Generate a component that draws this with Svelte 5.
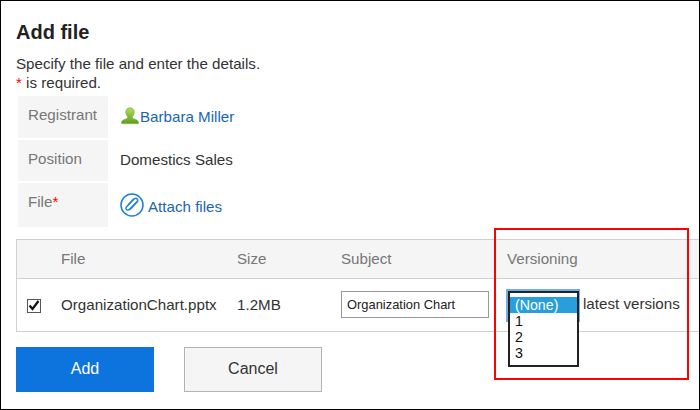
<script>
  const headers = [
    { label: '', cls: 'c-check' },
    { label: 'File', cls: 'c-file' },
    { label: 'Size', cls: 'c-size' },
    { label: 'Subject', cls: 'c-subject' },
    { label: 'Versioning', cls: 'c-ver' }
  ];
  const options = ['1', '2', '3'];
</script>

<div class="frame">
  <h1>Add file</h1>
  <p class="intro">Specify the file and enter the details.<br /><span class="req">*</span> is required.</p>

  <div class="details">
    <div class="label r1">Registrant</div>
    <div class="value r1">
      <svg class="user" width="18" height="18" viewBox="0 0 18 18">
        <defs>
          <linearGradient id="ug" x1="0" y1="0" x2="0" y2="1">
            <stop offset="0" stop-color="#b4de5c" />
            <stop offset="1" stop-color="#5c9f1e" />
          </linearGradient>
        </defs>
        <path d="M9 .8c2.700 0 4.200 2 4.200 4.500 0 1.900-.9 3.500-1.900 4.400v1c0 .8 1.500 1.100 3.200 1.800 1.800.7 2.900 1.500 2.900 3.200v.9H.6v-.9c0-1.700 1.100-2.500 2.900-3.200 1.700-.7 3.200-1 3.200-1.800v-1c-1-.9-1.900-2.500-1.900-4.400C4.800 2.800 6.300.8 9 .8z" fill="url(#ug)" stroke="#6b9f2a" stroke-width=".6" />
      </svg>
      <a href="#u">Barbara Miller</a>
    </div>

    <div class="label r2">Position</div>
    <div class="value r2"><span class="plain">Domestics Sales</span></div>

    <div class="label r3">File<span class="req">*</span></div>
    <div class="value r3">
      <svg class="clip" width="24" height="24" viewBox="0 0 24 24" fill="none" stroke="#1a7fdc">
        <circle cx="12" cy="12" r="11" stroke-width="1.500" />
        <path d="M17.300 8.300l-7.700 7.900c-1.100 1.100-2.400 1.200-3.200.4-.8-.8-.7-2.100.4-3.200l6.700-6.900c1.300-1.300 2.800-1.500 3.700-.6.900.9.700 2.300-.5 3.600l-6.700 6.900" stroke-width="1.400" stroke-linecap="round" />
        <path d="M8.500 11.500l5-5.200" stroke-width="1.400" stroke-linecap="round" />
      </svg>
      <a href="#f">Attach files</a>
    </div>
  </div>

  <div class="table">
    <div class="row head">
      {#each headers as h}
        <div class={h.cls}>{h.label}</div>
      {/each}
    </div>
    <div class="row body">
      <div class="c-check"><span class="check"><svg width="12" height="11" viewBox="0 0 12 11"><path d="M1.500 5.500l3 3.500 6-8" fill="none" stroke="#111" stroke-width="2.200" /></svg></span></div>
      <div class="c-file">OrganizationChart.pptx</div>
      <div class="c-size">1.2MB</div>
      <div class="c-subject"><span class="input">Organization Chart</span></div>
      <div class="c-ver"><span class="latest">latest versions</span></div>
    </div>
  </div>

  <div class="actions">
    <button class="primary">Add</button>
    <button class="secondary">Cancel</button>
  </div>

  <div class="ring"></div>
  <div class="listbox">
    <div class="opt selected">(None)</div>
    {#each options as o}
      <div class="opt">{o}</div>
    {/each}
  </div>
  <div class="callout"></div>
</div>

<style>
  :global(body) {
    margin: 0;
    background: #fff;
  }
  .frame {
    position: relative;
    box-sizing: border-box;
    width: 700px;
    height: 410px;
    border: 1px solid #000;
    padding: 0 0 0 15px;
    font-family: "Liberation Sans", Arial, sans-serif;
    font-size: 15.15px;
    color: #333;
    overflow: hidden;
  }
  h1 {
    margin: 0;
    padding-top: 20px;
    font-size: 20px;
    line-height: 23px;
    font-weight: 700;
    color: #222;
  }
  .intro {
    margin: 10px 0 0;
    line-height: 19px;
    height: 42px;
  }
  .req {
    color: #f00;
  }
  .details {
    display: grid;
    grid-template-columns: 90px 1fr;
    grid-template-rows: 42px 41px 44px;
    row-gap: 2px;
    margin-left: 2px;
  }
  .label {
    background: #f5f5f5;
    color: #777;
    padding: 9px 0 0 10px;
    line-height: 19px;
  }
  .value {
    padding-left: 12px;
    line-height: 19px;
    display: flex;
    align-items: flex-start;
  }
  .value.r1 {
    padding: 11px 0 0 13px;
  }
  .value.r2 {
    padding-top: 10px;
  }
  .value.r3 {
    padding: 10px 0 0 12px;
  }
  .user {
    flex: none;
    margin-right: 1px;
  }
  .clip {
    flex: none;
    margin-right: 4px;
  }
  .value.r3 a {
    margin-top: 4px;
  }
  a {
    color: #1a66b0;
    text-decoration: none;
  }
  .plain {
    color: #333;
  }
  .table {
    margin-top: 12px;
    margin-right: -1px;
    border: 1px solid #d0d0d0;
    border-right: 0;
  }
  .row {
    display: flex;
    align-items: center;
  }
  .head {
    height: 36px;
    padding-bottom: 2px;
    background: #f5f5f5;
    border-bottom: 1px solid #d0d0d0;
    color: #777;
  }
  .body {
    height: 50px;
    padding-bottom: 2px;
  }
  .c-check {
    width: 44px;
    flex: none;
  }
  .c-file {
    width: 176px;
    flex: none;
  }
  .c-size {
    width: 104px;
    flex: none;
  }
  .c-subject {
    width: 166px;
    flex: none;
  }
  .c-ver {
    flex: 1;
  }
  .check {
    display: flex;
    align-items: center;
    justify-content: center;
    box-sizing: border-box;
    width: 14px;
    height: 14px;
    margin: 3px 0 0 10px;
    border: 1px solid #555;
    background: #fff;
  }
  .input {
    display: block;
    box-sizing: border-box;
    width: 148px;
    height: 27px;
    border: 1px solid #999;
    padding-left: 5px;
    font-size: 12.9px;
    line-height: 25px;
    color: #222;
  }
  .latest {
    display: block;
    padding-left: 76px;
    margin-top: -2px;
  }
  .actions {
    display: flex;
    gap: 30px;
    margin-top: 15px;
  }
  button {
    box-sizing: border-box;
    width: 138px;
    height: 45px;
    font: inherit;
    font-size: 16px;
    padding: 0 0 2px;
  }
  .primary {
    border: 0;
    background: #0e74dd;
    color: #fff;
  }
  .secondary {
    border: 1px solid #b3b3b3;
    background: #f5f5f5;
    color: #333;
  }
  .ring {
    position: absolute;
    left: 505px;
    top: 288px;
    width: 74px;
    height: 33px;
    background: #6fb1e6;
  }
  .listbox {
    position: absolute;
    left: 507px;
    top: 290px;
    box-sizing: border-box;
    width: 71px;
    height: 76px;
    padding-top: 4px;
    border: 2px solid #222;
    background: #fff;
    color: #111;
    font-size: 14.2px;
    line-height: 16px;
  }
  .opt {
    padding-left: 5px;
  }
  .selected {
    background: #289fdc;
    color: #fff;
  }
  .callout {
    position: absolute;
    left: 493px;
    top: 227px;
    box-sizing: border-box;
    width: 195px;
    height: 152px;
    border: 2px solid #f00;
  }
</style>
